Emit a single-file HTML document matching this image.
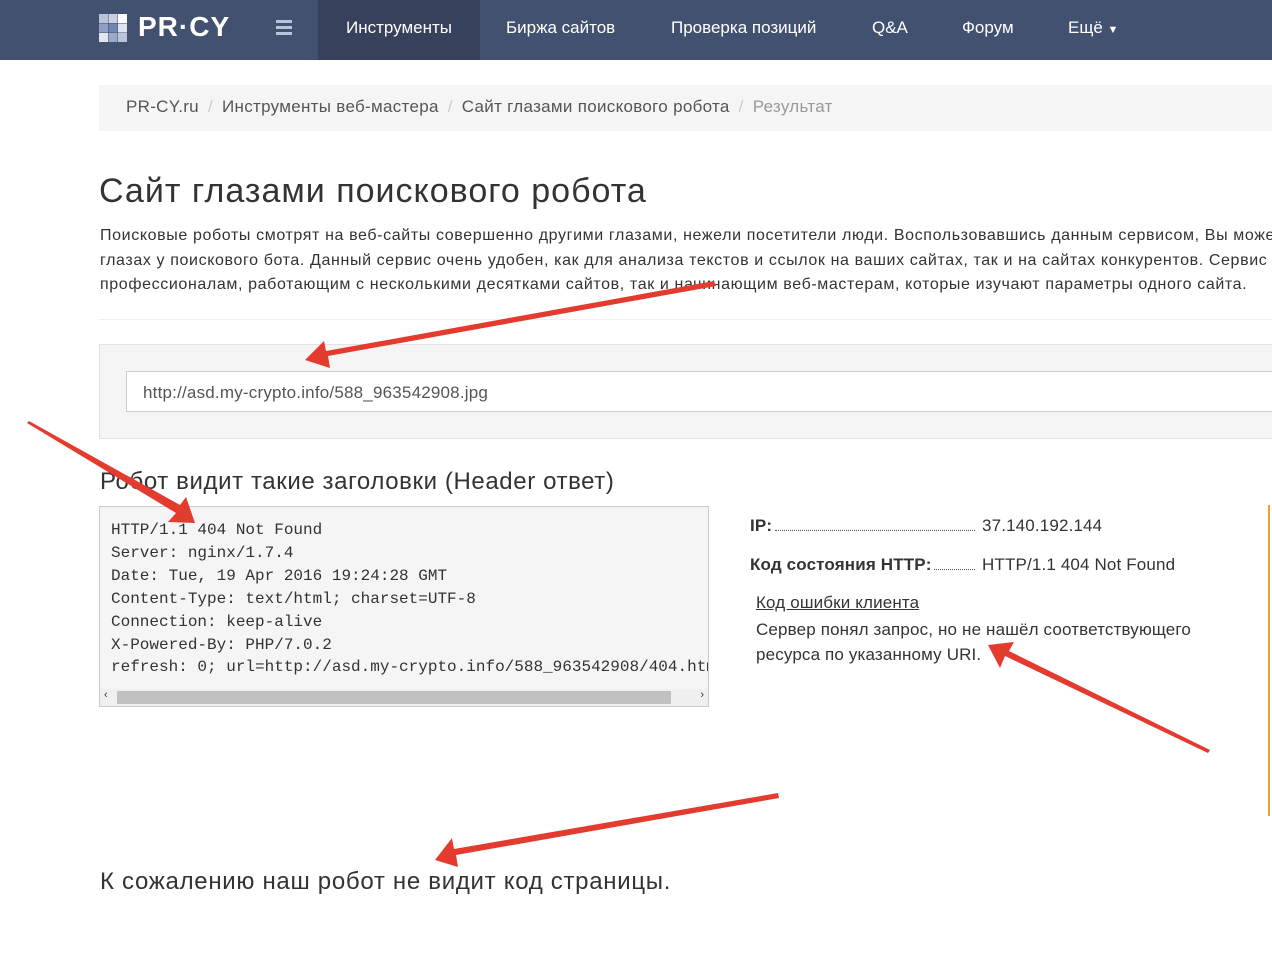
<!DOCTYPE html>
<html><head><meta charset="utf-8"><style>
*{margin:0;padding:0;box-sizing:border-box}
body{width:1272px;height:973px;overflow:hidden;background:#fff;font-family:"Liberation Sans",Arial,sans-serif;color:#333;position:relative}
.nav{height:60px;background:#435170;position:relative}
.nav .logo{position:absolute;left:99px;top:14px}
.nav .brand{position:absolute;left:138px;top:11px;color:#fff;font-weight:bold;font-size:28px;letter-spacing:1px}
.nav .burger{position:absolute;left:276px;top:20px;width:16px}
.nav .burger i{display:block;height:3px;background:#b8c2d8;margin-bottom:3px}
.nav a{position:absolute;top:0;height:60px;line-height:56px;color:#fff;font-size:17px;text-decoration:none}
.nav .act{left:318px;width:162px;background:#37415b;text-align:center}
.bc{position:absolute;left:99px;top:85px;width:1200px;height:46px;background:#f5f5f5;font-size:17px;line-height:44px;padding-left:27px;color:#555;letter-spacing:0.3px}
.bc .s{color:#ccc;margin:0 9px}
.bc .l{color:#999}
h1{position:absolute;left:99px;top:172px;font-size:34px;font-weight:normal;color:#333;letter-spacing:1px}
.desc{position:absolute;left:100px;top:224px;width:1400px;font-size:16px;line-height:24.5px;color:#333;letter-spacing:0.62px}
.hr{position:absolute;left:99px;top:319px;width:1200px;border-top:1px solid #eee}
.well{position:absolute;left:99px;top:344px;width:1200px;height:95px;background:#f5f5f5;border:1px solid #e3e3e3}
.inp{position:absolute;left:126px;top:371px;width:1200px;height:41px;background:#fff;border:1px solid #ccc;font-size:17px;line-height:42px;padding-left:16px;color:#555;letter-spacing:0.2px}
h3{position:absolute;left:100px;top:468px;font-size:24px;font-weight:normal;letter-spacing:0.6px}
pre{position:absolute;left:99px;top:506px;width:610px;height:201px;background:#f5f5f5;border:1px solid #ccc;font-family:"Liberation Mono",monospace;font-size:16px;line-height:22.9px;padding:12px 11px;overflow:hidden;white-space:pre;color:#333}
.sb{position:absolute;left:100px;top:689px;width:608px;height:17px;background:#f0f0f0}
.sb .th{position:absolute;left:17px;top:2px;width:554px;height:13px;background:#c1c1c1}
.r{position:absolute;font-size:17px;letter-spacing:0.15px}
.dots{position:absolute;border-bottom:1px dotted #555}
.bot{position:absolute;left:100px;top:868px;font-size:24px;letter-spacing:0.7px}
.or{position:absolute;left:1268px;top:505px;width:4px;height:311px;border-left:2px solid #f0a030}
</style></head><body>
<div class="nav">
<svg class="logo" width="28" height="28"><rect x="0" y="0" width="9" height="9" fill="#b8c2d8"/><rect x="9.5" y="0" width="9" height="9" fill="#c8d0e2"/><rect x="19" y="0" width="9" height="9" fill="#fff"/><rect x="0" y="9.5" width="9" height="9" fill="#8f9fc3"/><rect x="9.5" y="9.5" width="9" height="9" fill="#7185b5"/><rect x="19" y="9.5" width="9" height="9" fill="#dfe4ee"/><rect x="0" y="19" width="9" height="9" fill="#e0e5ef"/><rect x="9.5" y="19" width="9" height="9" fill="#9aa9ca"/><rect x="19" y="19" width="9" height="9" fill="#b9c3d9"/></svg>
<div class="brand">PR·CY</div>
<div class="burger"><i></i><i></i><i></i></div>
<a class="act">Инструменты</a>
<a style="left:506px">Биржа сайтов</a>
<a style="left:671px">Проверка позиций</a>
<a style="left:872px">Q&amp;A</a>
<a style="left:962px">Форум</a>
<a style="left:1068px">Ещё <span style="font-size:11px">▼</span></a>
</div>
<div class="bc">PR-CY.ru<span class="s">/</span>Инструменты веб-мастера<span class="s">/</span>Сайт глазами поискового робота<span class="s">/</span><span class="l">Результат</span></div>
<h1>Сайт глазами поискового робота</h1>
<div class="desc">Поисковые роботы смотрят на веб-сайты совершенно другими глазами, нежели посетители люди. Воспользовавшись данным сервисом, Вы можете<br>глазах у поискового бота. Данный сервис очень удобен, как для анализа текстов и ссылок на ваших сайтах, так и на сайтах конкурентов. Сервис<br>профессионалам, работающим с несколькими десятками сайтов, так и начинающим веб-мастерам, которые изучают параметры одного сайта.</div>
<div class="hr"></div>
<div class="well"></div>
<div class="inp">http://asd.my-crypto.info/588_963542908.jpg</div>
<h3>Робот видит такие заголовки (Header ответ)</h3>
<pre>HTTP/1.1 404 Not Found
Server: nginx/1.7.4
Date: Tue, 19 Apr 2016 19:24:28 GMT
Content-Type: text/html; charset=UTF-8
Connection: keep-alive
X-Powered-By: PHP/7.0.2
refresh: 0; url=http://asd.my-crypto.info/588_963542908/404.html</pre>
<div class="sb"><span style="position:absolute;left:4px;top:0;font-size:11px">‹</span><div class="th"></div><span style="position:absolute;right:4px;top:0;font-size:11px">›</span></div>
<div class="r" style="left:750px;top:516px;font-weight:bold">IP:</div>
<div class="dots" style="left:775px;top:516px;width:200px;height:15px"></div>
<div class="r" style="left:982px;top:516px">37.140.192.144</div>
<div class="r" style="left:750px;top:555px;font-weight:bold">Код состояния HTTP:</div>
<div class="dots" style="left:934px;top:555px;width:41px;height:15px"></div>
<div class="r" style="left:982px;top:555px">HTTP/1.1 404 Not Found</div>
<div class="r" style="left:756px;top:593px;text-decoration:underline">Код ошибки клиента</div>
<div class="r" style="left:756px;top:617px;line-height:25px">Сервер понял запрос, но не нашёл соответствующего<br>ресурса по указанному URI.</div>
<div class="or"></div>
<div class="bot">К сожалению наш робот не видит код страницы.</div>
<svg style="position:absolute;left:0;top:0" width="1272" height="973">
<g fill="#e33b2e">
<polygon points="714,281 716,286 328,356 330,368 305,360 324,341 326,351"/>
<polygon points="27,423 29,421 180,505 186,497 195,523 168,522 176,513"/>
<polygon points="1210,750 1208,753 1005,656 1000,668 988,645 1014,642 1009,651"/>
<polygon points="778,793 779,798 456,855 458,867 435,860 452,838 454,849"/>
</g></svg>
</body></html>
